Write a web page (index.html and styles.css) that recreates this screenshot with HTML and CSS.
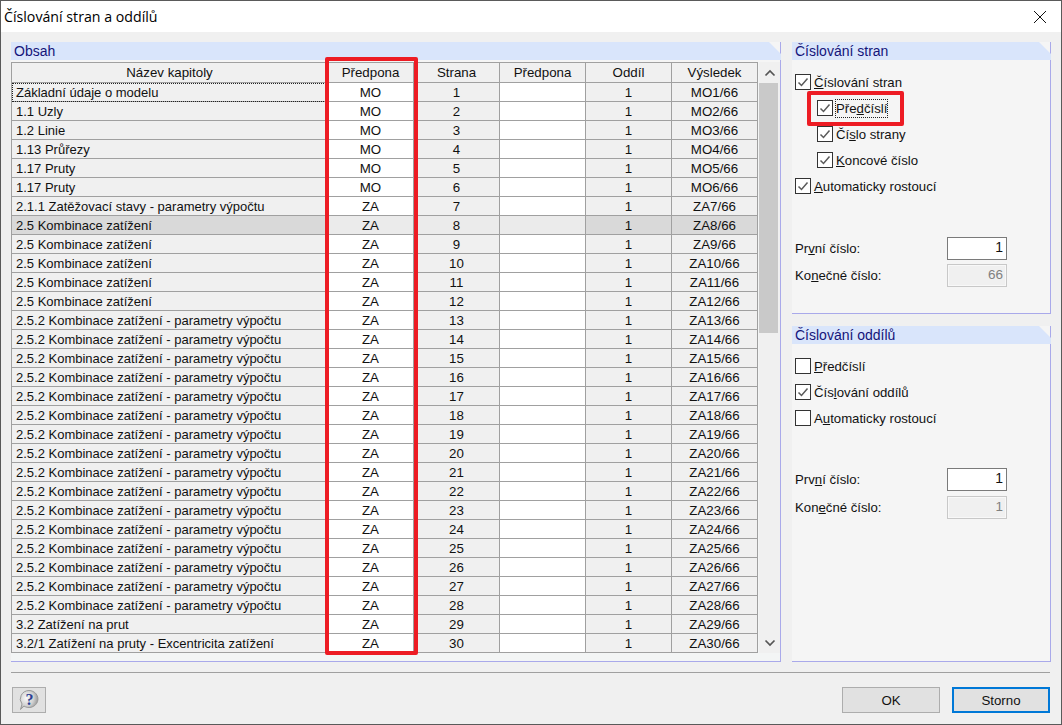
FILE: index.html
```html
<!DOCTYPE html>
<html lang="cs">
<head>
<meta charset="utf-8">
<title>Číslování stran a oddílů</title>
<link rel="stylesheet" href="styles.css">
</head>
<body>
<div class="dialog">
  <header class="titlebar">
    <span class="title">Číslování stran a oddílů</span>
    <svg class="close" width="12" height="12" viewBox="0 0 12 12"><path d="M0 0L12 12M12 0L0 12" stroke="#111" stroke-width="1" fill="none"/></svg>
  </header>
  <main class="main">
    <section class="panel panel-table">
      <h2 class="panel-head">Obsah</h2>
      <div class="table-wrap">
        <table class="grid">
          <colgroup><col class="c-name"><col class="c-n"><col class="c-n"><col class="c-n"><col class="c-n"><col class="c-n"></colgroup>
          <thead><tr><th>Název kapitoly</th><th>Předpona</th><th>Strana</th><th>Předpona</th><th>Oddíl</th><th>Výsledek</th></tr></thead>
          <tbody>
            <tr><td class="name focus">Základní údaje o modelu</td><td class="edit">MO</td><td>1</td><td class="edit"></td><td>1</td><td>MO1/66</td></tr>
            <tr><td class="name">1.1 Uzly</td><td class="edit">MO</td><td>2</td><td class="edit"></td><td>1</td><td>MO2/66</td></tr>
            <tr><td class="name">1.2 Linie</td><td class="edit">MO</td><td>3</td><td class="edit"></td><td>1</td><td>MO3/66</td></tr>
            <tr><td class="name">1.13 Průřezy</td><td class="edit">MO</td><td>4</td><td class="edit"></td><td>1</td><td>MO4/66</td></tr>
            <tr><td class="name">1.17 Pruty</td><td class="edit">MO</td><td>5</td><td class="edit"></td><td>1</td><td>MO5/66</td></tr>
            <tr><td class="name">1.17 Pruty</td><td class="edit">MO</td><td>6</td><td class="edit"></td><td>1</td><td>MO6/66</td></tr>
            <tr><td class="name">2.1.1 Zatěžovací stavy - parametry výpočtu</td><td class="edit">ZA</td><td>7</td><td class="edit"></td><td>1</td><td>ZA7/66</td></tr>
            <tr class="sel"><td class="name">2.5 Kombinace zatížení</td><td class="edit">ZA</td><td class="edit">8</td><td class="edit"></td><td>1</td><td>ZA8/66</td></tr>
            <tr><td class="name">2.5 Kombinace zatížení</td><td class="edit">ZA</td><td>9</td><td class="edit"></td><td>1</td><td>ZA9/66</td></tr>
            <tr><td class="name">2.5 Kombinace zatížení</td><td class="edit">ZA</td><td>10</td><td class="edit"></td><td>1</td><td>ZA10/66</td></tr>
            <tr><td class="name">2.5 Kombinace zatížení</td><td class="edit">ZA</td><td>11</td><td class="edit"></td><td>1</td><td>ZA11/66</td></tr>
            <tr><td class="name">2.5 Kombinace zatížení</td><td class="edit">ZA</td><td>12</td><td class="edit"></td><td>1</td><td>ZA12/66</td></tr>
            <tr><td class="name">2.5.2 Kombinace zatížení - parametry výpočtu</td><td class="edit">ZA</td><td>13</td><td class="edit"></td><td>1</td><td>ZA13/66</td></tr>
            <tr><td class="name">2.5.2 Kombinace zatížení - parametry výpočtu</td><td class="edit">ZA</td><td>14</td><td class="edit"></td><td>1</td><td>ZA14/66</td></tr>
            <tr><td class="name">2.5.2 Kombinace zatížení - parametry výpočtu</td><td class="edit">ZA</td><td>15</td><td class="edit"></td><td>1</td><td>ZA15/66</td></tr>
            <tr><td class="name">2.5.2 Kombinace zatížení - parametry výpočtu</td><td class="edit">ZA</td><td>16</td><td class="edit"></td><td>1</td><td>ZA16/66</td></tr>
            <tr><td class="name">2.5.2 Kombinace zatížení - parametry výpočtu</td><td class="edit">ZA</td><td>17</td><td class="edit"></td><td>1</td><td>ZA17/66</td></tr>
            <tr><td class="name">2.5.2 Kombinace zatížení - parametry výpočtu</td><td class="edit">ZA</td><td>18</td><td class="edit"></td><td>1</td><td>ZA18/66</td></tr>
            <tr><td class="name">2.5.2 Kombinace zatížení - parametry výpočtu</td><td class="edit">ZA</td><td>19</td><td class="edit"></td><td>1</td><td>ZA19/66</td></tr>
            <tr><td class="name">2.5.2 Kombinace zatížení - parametry výpočtu</td><td class="edit">ZA</td><td>20</td><td class="edit"></td><td>1</td><td>ZA20/66</td></tr>
            <tr><td class="name">2.5.2 Kombinace zatížení - parametry výpočtu</td><td class="edit">ZA</td><td>21</td><td class="edit"></td><td>1</td><td>ZA21/66</td></tr>
            <tr><td class="name">2.5.2 Kombinace zatížení - parametry výpočtu</td><td class="edit">ZA</td><td>22</td><td class="edit"></td><td>1</td><td>ZA22/66</td></tr>
            <tr><td class="name">2.5.2 Kombinace zatížení - parametry výpočtu</td><td class="edit">ZA</td><td>23</td><td class="edit"></td><td>1</td><td>ZA23/66</td></tr>
            <tr><td class="name">2.5.2 Kombinace zatížení - parametry výpočtu</td><td class="edit">ZA</td><td>24</td><td class="edit"></td><td>1</td><td>ZA24/66</td></tr>
            <tr><td class="name">2.5.2 Kombinace zatížení - parametry výpočtu</td><td class="edit">ZA</td><td>25</td><td class="edit"></td><td>1</td><td>ZA25/66</td></tr>
            <tr><td class="name">2.5.2 Kombinace zatížení - parametry výpočtu</td><td class="edit">ZA</td><td>26</td><td class="edit"></td><td>1</td><td>ZA26/66</td></tr>
            <tr><td class="name">2.5.2 Kombinace zatížení - parametry výpočtu</td><td class="edit">ZA</td><td>27</td><td class="edit"></td><td>1</td><td>ZA27/66</td></tr>
            <tr><td class="name">2.5.2 Kombinace zatížení - parametry výpočtu</td><td class="edit">ZA</td><td>28</td><td class="edit"></td><td>1</td><td>ZA28/66</td></tr>
            <tr><td class="name">3.2 Zatížení na prut</td><td class="edit">ZA</td><td>29</td><td class="edit"></td><td>1</td><td>ZA29/66</td></tr>
            <tr><td class="name">3.2/1 Zatížení na pruty - Excentricita zatížení</td><td class="edit">ZA</td><td>30</td><td class="edit"></td><td>1</td><td>ZA30/66</td></tr>
          </tbody>
        </table>
        <div class="scrollbar">
          <div class="sb-btn"><svg width="12" height="8" viewBox="0 0 12 8"><path d="M1.5 6.5L6 2L10.500 6.500" stroke="#555" stroke-width="1.700" fill="none"/></svg></div>
          <div class="sb-track"><div class="sb-thumb"></div></div>
          <div class="sb-btn"><svg width="12" height="8" viewBox="0 0 12 8"><path d="M1.5 1.500L6 6L10.500 1.500" stroke="#555" stroke-width="1.700" fill="none"/></svg></div>
        </div>
      </div>
      <div class="mark mark-col"></div>
    </section>
    <div class="side">
      <section class="panel panel-pages">
        <h2 class="panel-head">Číslování stran</h2>
        <div class="panel-body">
          <div class="chk"><span class="box on"><svg width="14" height="14" viewBox="0 0 14 14"><path d="M2.500 7.500L5.500 10.500L11.500 3.500" stroke="#5a5a5a" stroke-width="1.500" fill="none"/></svg></span><span><u>Č</u>íslování stran</span></div>
          <div class="chk sub"><span class="box on"><svg width="14" height="14" viewBox="0 0 14 14"><path d="M2.500 7.500L5.500 10.500L11.500 3.500" stroke="#5a5a5a" stroke-width="1.500" fill="none"/></svg></span><span class="focus-label">Pře<u>d</u>číslí</span></div>
          <div class="chk sub"><span class="box on"><svg width="14" height="14" viewBox="0 0 14 14"><path d="M2.500 7.500L5.500 10.500L11.500 3.500" stroke="#5a5a5a" stroke-width="1.500" fill="none"/></svg></span><span>Čí<u>s</u>lo strany</span></div>
          <div class="chk sub"><span class="box on"><svg width="14" height="14" viewBox="0 0 14 14"><path d="M2.500 7.500L5.500 10.500L11.500 3.500" stroke="#5a5a5a" stroke-width="1.500" fill="none"/></svg></span><span><u>K</u>oncové číslo</span></div>
          <div class="chk"><span class="box on"><svg width="14" height="14" viewBox="0 0 14 14"><path d="M2.500 7.500L5.500 10.500L11.500 3.500" stroke="#5a5a5a" stroke-width="1.500" fill="none"/></svg></span><span><u>A</u>utomaticky rostoucí</span></div>
          <div class="nums nums-pages">
            <div class="num"><span>Pr<u>v</u>ní číslo:</span><span class="input">1</span></div>
            <div class="num"><span>Ko<u>n</u>ečné číslo:</span><span class="input off">66</span></div>
          </div>
        </div>
      </section>
      <section class="panel panel-sections">
        <h2 class="panel-head">Číslování oddílů</h2>
        <div class="panel-body">
          <div class="chk"><span class="box"></span><span><u>P</u>ředčíslí</span></div>
          <div class="chk"><span class="box on"><svg width="14" height="14" viewBox="0 0 14 14"><path d="M2.500 7.500L5.500 10.500L11.500 3.500" stroke="#5a5a5a" stroke-width="1.500" fill="none"/></svg></span><span>Čís<u>l</u>ování oddílů</span></div>
          <div class="chk"><span class="box"></span><span>A<u>u</u>tomaticky rostoucí</span></div>
          <div class="nums nums-sections">
            <div class="num"><span>Prv<u>n</u>í číslo:</span><span class="input">1</span></div>
            <div class="num"><span>Kon<u>e</u>čné číslo:</span><span class="input off">1</span></div>
          </div>
        </div>
      </section>
    </div>
  </main>
  <div class="separator"></div>
  <footer class="footer">
    <button class="btn help" aria-label="Nápověda">
      <svg width="24" height="22" viewBox="0 0 24 22">
        <defs><radialGradient id="hg" cx="0.35" cy="0.4" r="0.75"><stop offset="0" stop-color="#fafafa"/><stop offset="0.55" stop-color="#d0d0d0"/><stop offset="1" stop-color="#858585"/></radialGradient></defs>
        <path d="M12 1.500a9 8.500 0 1 1-5 15.600L3.500 20.500L5 15a9 8.500 0 0 1 7-13.500z" fill="url(#hg)" stroke="#9a9a9a" stroke-width="1"/>
        <text x="12.500" y="15.500" text-anchor="middle" class="help-q">?</text>
      </svg>
    </button>
    <div class="footer-right">
      <button class="btn">OK</button>
      <button class="btn primary">Storno</button>
    </div>
  </footer>
  <div class="mark mark-chk"></div>
</div>
</body>
</html>
```
FILE: styles.css
```css
* { box-sizing: border-box; }
html, body { margin: 0; padding: 0; }
body { width: 1062px; height: 725px; overflow: hidden; font-family: "Liberation Sans", Arial, sans-serif; font-size: 12px; color: #111; }
.dialog { position: relative; width: 1062px; height: 725px; background: #f0f0f0; border: 1px solid #5a5a5a; display: flex; flex-direction: column; }
.titlebar { height: 31px; background: #fff; display: flex; align-items: center; justify-content: space-between; padding: 0 15px 0 3px; flex: none; }
.title { font-family: "Open Sans", sans-serif; font-size: 14.200px; color: #000; }
.close { display: block; }
.main { display: flex; gap: 11px; margin: 10px 10px 0 10px; height: 620px; flex: none; }
.panel { background: #f5f5f5; border-right: 1px solid #a9a9ea; border-bottom: 1px solid #a9a9ea; display: flex; flex-direction: column; position: relative; }
.panel-head { margin: 0 -1px 0 0; height: 18px; line-height: 18px; font-size: 14px; font-weight: normal; color: #14147a; background: #d9e5fb; padding-left: 3px; clip-path: polygon(0 0, calc(100% - 12px) 0, 100% 12px, 100% 100%, 0 100%); flex: none; }
.panel-table { width: 770px; }
.table-wrap { display: flex; margin-top: 2px; padding-bottom: 8px; flex: 1; background: #f3f5f5; }
.grid { border-collapse: separate; border-spacing: 0; table-layout: fixed; width: 747px; flex: none; border-top: 1px solid #a0a0a0; border-left: 1px solid #a0a0a0; align-self: flex-start; background: #f0f0f0; }
.c-name { width: 316px; }
.c-n { width: 86px; }
.grid th, .grid td { border-right: 1px solid #a0a0a0; border-bottom: 1px solid #a0a0a0; padding: 2px 0 0; text-align: center; font-weight: normal; overflow: hidden; white-space: nowrap; line-height: 16px; height: 19px; font-size: 13.300px; color: #111; }
.grid th { height: 20px; padding: 0; line-height: 19px; }
.grid td.name { text-align: left; padding-left: 4px; font-size: 13px; }
.grid td.edit { background: #fff; }
.grid td.focus { outline: 1px dotted #222; outline-offset: -1px; }
.sel td { background: #d9d9d9; }
.grid .sel td.edit { background: #ebebeb; }
.scrollbar { width: 21px; margin-left: 1px; display: flex; flex-direction: column; background: #f0f0f0; }
.sb-btn { height: 21px; display: flex; align-items: center; justify-content: center; flex: none; }
.sb-track { flex: 1; }
.sb-thumb { height: 250px; width: 19px; background: #c9c9c9; }
.side { width: 260px; display: flex; flex-direction: column; gap: 12px; }
.panel-pages { height: 272px; }
.panel-sections { flex: 1; }
.panel-body { padding: 14px 0 0 3px; display: flex; flex-direction: column; font-size: 13.200px; color: #111; }
.chk { height: 26px; display: flex; align-items: flex-start; gap: 3px; line-height: 18px; }
.chk.sub { padding-left: 22px; }
.box { width: 16px; height: 16px; flex: none; background: #fff; border: 1px solid #333; display: flex; align-items: center; justify-content: center; }
.focus-label { outline: 1px dotted #222; height: 17px; }
.nums { display: flex; flex-direction: column; padding-right: 43px; }
.nums-pages { margin-top: 33px; gap: 4px; }
.nums-sections { margin-top: 32px; gap: 5px; }
.num { display: flex; justify-content: space-between; align-items: center; height: 23px; }
.input { width: 60px; height: 23px; background: #fff; border: 1px solid #7a7a7a; text-align: right; padding-right: 3px; line-height: 19px; font-size: 14px; color: #111; }
.input.off { background: #f0f0f0; border-color: #c8c8c8; color: #808080; box-shadow: inset 0 0 0 1px #f8f8f8; font-size: 13.500px; }
.separator { height: 1px; margin: 10px 10px 0 10px; background: #a0a0a0; width: 1039px; flex: none; }
.footer { display: flex; justify-content: space-between; margin: 14px 11px 0 11px; flex: none; }
.footer-right { display: flex; gap: 12px; }
.btn { width: 98px; height: 26px; background: #e1e1e1; border: 1px solid #adadad; font: 13.300px "Liberation Sans", Arial, sans-serif; color: #111; padding: 0; display: flex; align-items: center; justify-content: center; }
.btn.primary { border: 2px solid #0078d7; }
.btn.help { width: 34px; }
.help-q { font: bold 16px "Liberation Serif", serif; fill: #2b3f94; }
.mark { position: absolute; border: 4px solid #ed1c24; border-radius: 2px; pointer-events: none; }
.mark-col { left: 314px; top: 15px; width: 93px; height: 598px; }
.mark-chk { left: 806px; top: 90px; width: 97px; height: 35px; }
```
